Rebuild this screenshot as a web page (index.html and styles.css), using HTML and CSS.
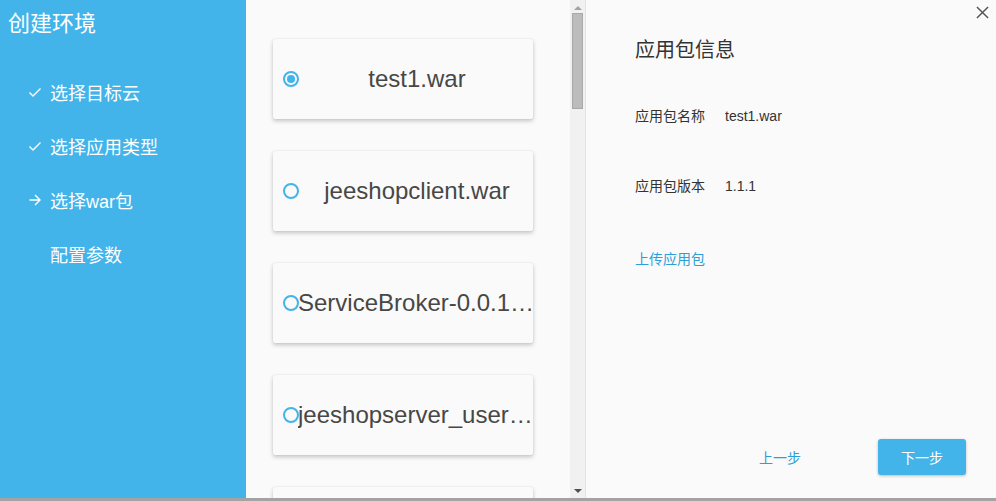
FILE: index.html
```html
<!DOCTYPE html>
<html lang="zh-CN">
<head>
<meta charset="utf-8">
<title>创建环境</title>
<link rel="stylesheet" href="styles.css">
</head>
<body>
<div class="modal">
  <aside class="sidebar">
    <h1 class="sb-title">创建环境</h1>
    <ul class="steps">
      <li class="step"><svg class="step-icon" viewBox="0 0 14 14"><polyline points="1.5,7.5 5,11 12.5,3.5" fill="none" stroke="#fff" stroke-width="1.4"/></svg><span>选择目标云</span></li>
      <li class="step"><svg class="step-icon" viewBox="0 0 14 14"><polyline points="1.5,7.5 5,11 12.5,3.5" fill="none" stroke="#fff" stroke-width="1.4"/></svg><span>选择应用类型</span></li>
      <li class="step"><svg class="step-icon" viewBox="0 0 14 14"><path d="M1.5 7 H12 M7 2 L12 7 L7 12" fill="none" stroke="#fff" stroke-width="1.4"/></svg><span>选择war包</span></li>
      <li class="step"><span class="step-icon"></span><span>配置参数</span></li>
    </ul>
  </aside>
  <section class="list">
    <div class="cards">
      <div class="card"><span class="radio checked"></span><span class="name">test1.war</span></div>
      <div class="card"><span class="radio"></span><span class="name">jeeshopclient.war</span></div>
      <div class="card"><span class="radio"></span><span class="name">ServiceBroker-0.0.1-SNAPSHOT.war</span></div>
      <div class="card"><span class="radio"></span><span class="name">jeeshopserver_user_center.war</span></div>
      <div class="card"><span class="radio"></span><span class="name"></span></div>
    </div>
    <div class="scrollbar">
      <div class="sb-btn"><span class="tri-up"></span></div>
      <div class="sb-track"><div class="sb-thumb"></div></div>
      <div class="sb-btn"><span class="tri-down"></span></div>
    </div>
  </section>
  <section class="info">
    <button class="close" aria-label="关闭"><svg viewBox="0 0 14 14"><path d="M1 1 L13 13 M13 1 L1 13" stroke="#555" stroke-width="1.6" fill="none"/></svg></button>
    <h2 class="info-title">应用包信息</h2>
    <div class="row row-first"><span class="label">应用包名称</span><span class="value">test1.war</span></div>
    <div class="row row-second"><span class="label">应用包版本</span><span class="value">1.1.1</span></div>
    <a class="upload">上传应用包</a>
    <div class="footer">
      <button class="btn btn-prev">上一步</button>
      <button class="btn btn-next">下一步</button>
    </div>
  </section>
</div>
</body>
</html>
```
FILE: styles.css
```css
html, body {
  margin: 0;
  padding: 0;
}
body {
  background: #a3a3a3;
  font-family: "Liberation Sans", "Noto Sans CJK SC", sans-serif;
  height: 501px;
  overflow: hidden;
}
.modal {
  display: flex;
  height: 498px;
  background: #fafafa;
}
.sidebar {
  width: 246px;
  flex: none;
  background: #42b4e9;
  color: #fff;
}
.sb-title {
  margin: 0;
  padding: 9px 0 0 8px;
  font-size: 22px;
  font-weight: normal;
  line-height: 30px;
}
.steps {
  list-style: none;
  margin: 0;
  padding: 26px 0 0 0;
}
.step {
  display: flex;
  align-items: center;
  height: 54px;
  padding-left: 28px;
  font-size: 18px;
}
.step-icon {
  width: 14px;
  height: 14px;
  margin-right: 8px;
  flex: none;
}
.list {
  width: 340px;
  flex: none;
  display: flex;
  border-right: 1px solid #e4e4e4;
  box-sizing: border-box;
  background: #fafafa;
}
.cards {
  flex: 1;
  overflow: hidden;
  padding-top: 39px;
}
.card {
  display: flex;
  align-items: center;
  width: 260px;
  height: 80px;
  margin: 0 0 32px 27px;
  padding-left: 10px;
  box-sizing: border-box;
  background: #fafafa;
  border-radius: 2px;
  box-shadow: 0 2px 4px rgba(0, 0, 0, 0.22), 0 0 1px rgba(0, 0, 0, 0.12);
}
.radio {
  width: 16px;
  height: 16px;
  box-sizing: border-box;
  border: 2px solid #42b4e9;
  border-radius: 50%;
  flex: none;
  position: relative;
}
.radio.checked::after {
  content: "";
  position: absolute;
  left: 2px;
  top: 2px;
  width: 8px;
  height: 8px;
  border-radius: 50%;
  background: #42b4e9;
}
.name {
  flex: 1;
  min-width: 0;
  margin-left: -1px;
  margin-right: -3px;
  text-align: center;
  font-size: 24px;
  color: #474747;
  white-space: nowrap;
  overflow: hidden;
  text-overflow: ellipsis;
}
.scrollbar {
  width: 15px;
  flex: none;
  display: flex;
  flex-direction: column;
  background: #f1f1f1;
}
.sb-btn {
  height: 13px;
  display: flex;
  align-items: center;
  justify-content: center;
  flex: none;
}
.tri-up {
  width: 0;
  height: 0;
  border-left: 4px solid transparent;
  border-right: 4px solid transparent;
  border-bottom: 4px solid #a3a3a3;
  margin-top: 2px;
}
.tri-down {
  width: 0;
  height: 0;
  border-left: 4px solid transparent;
  border-right: 4px solid transparent;
  border-top: 4px solid #505050;
  margin-bottom: 1px;
}
.sb-track {
  flex: 1;
}
.sb-thumb {
  margin: 0 2px;
  height: 96px;
  box-sizing: border-box;
  background: #bcbcbc;
  border: 1px solid #a9a9a9;
}
.info {
  flex: 1;
  position: relative;
  display: flex;
  flex-direction: column;
  padding: 36px 30px 23px 49px;
  box-sizing: border-box;
  color: #333;
}
.close {
  position: absolute;
  right: 6px;
  top: 5px;
  width: 15px;
  height: 15px;
  padding: 1px;
  border: 0;
  background: none;
}
.close svg {
  width: 13px;
  height: 13px;
  display: block;
}
.info-title {
  margin: 0;
  font-size: 20px;
  font-weight: normal;
  line-height: 28px;
}
.row {
  display: flex;
  font-size: 14px;
  line-height: 20px;
}
.row-first {
  margin-top: 42px;
}
.row-second {
  margin-top: 50px;
}
.label {
  width: 90px;
}
.upload {
  margin-top: 53px;
  font-size: 14px;
  line-height: 20px;
  color: #2d9fd8;
}
.footer {
  margin-top: auto;
  display: flex;
  justify-content: flex-end;
  gap: 54px;
}
.btn {
  width: 88px;
  height: 36px;
  border: 0;
  border-radius: 3px;
  font-family: "Liberation Sans", "Noto Sans CJK SC", sans-serif;
  font-size: 14px;
  padding: 0;
}
.btn-prev {
  background: transparent;
  color: #2d9fd8;
}
.btn-next {
  background: #42b4e9;
  color: #fff;
  box-shadow: 0 1px 3px rgba(0, 0, 0, 0.25);
}
```
